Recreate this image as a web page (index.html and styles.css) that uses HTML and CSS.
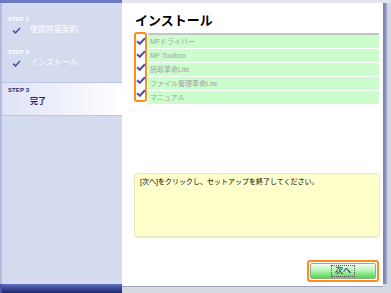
FILE: index.html
```html
<!DOCTYPE html>
<html lang="ja">
<head>
<meta charset="utf-8">
<link rel="stylesheet" href="styles.css">
</head>
<body>
<div class="win">
  <div class="tb-left"></div>
  <div class="tb-right"></div>
  <div class="tb-edge"></div>

  <aside class="side">
    <div class="step">
      <div class="lbl">STEP 1</div>
      <div class="name"><svg class="chk" viewBox="0 0 10 8"><path d="M1 4.2 L3.8 6.8 L9 1.2" fill="none" stroke="#4a559c" stroke-width="1.8"/></svg>使用許諾契約</div>
    </div>
    <div class="step">
      <div class="lbl">STEP 2</div>
      <div class="name"><svg class="chk" viewBox="0 0 10 8"><path d="M1 4.2 L3.8 6.8 L9 1.2" fill="none" stroke="#4a559c" stroke-width="1.8"/></svg>インストール</div>
    </div>
    <div class="step cur">
      <div class="lbl">STEP 3</div>
      <div class="name">完了</div>
    </div>
  </aside>

  <section class="panel">
    <h1 class="title">インストール</h1>
    <div class="list">
      <div class="checks">
        <svg class="lchk" viewBox="0 0 10 8"><path d="M1 4.2 L3.8 6.8 L9 1.2" fill="none" stroke="#4a50a0" stroke-width="2"/></svg>
        <svg class="lchk" viewBox="0 0 10 8"><path d="M1 4.2 L3.8 6.8 L9 1.2" fill="none" stroke="#4a50a0" stroke-width="2"/></svg>
        <svg class="lchk" viewBox="0 0 10 8"><path d="M1 4.2 L3.8 6.8 L9 1.2" fill="none" stroke="#4a50a0" stroke-width="2"/></svg>
        <svg class="lchk" viewBox="0 0 10 8"><path d="M1 4.2 L3.8 6.8 L9 1.2" fill="none" stroke="#4a50a0" stroke-width="2"/></svg>
        <svg class="lchk" viewBox="0 0 10 8"><path d="M1 4.2 L3.8 6.8 L9 1.2" fill="none" stroke="#4a50a0" stroke-width="2"/></svg>
      </div>
      <div class="rows">
        <div class="row">MFドライバー</div>
        <div class="row">MF Toolbox</div>
        <div class="row">読取革命Lite</div>
        <div class="row">ファイル管理革命Lite</div>
        <div class="row">マニュアル</div>
      </div>
    </div>
    <div class="msg">[次へ]をクリックし、セットアップを終了してください。</div>
    <div class="actions">
      <div class="focus"><div class="btn"><span class="btn-txt">次へ</span></div></div>
    </div>
  </section>
  <div class="edge"></div>

  <div class="bb-left"></div>
  <div class="bb-right"></div>
  <div class="bb-edge"></div>
</div>
</body>
</html>
```

FILE: styles.css
```css
html, body {
  margin: 0;
  padding: 0;
}
body {
  width: 391px;
  height: 293px;
  overflow: hidden;
  font-family: "Liberation Sans", "Noto Sans CJK JP", sans-serif;
}
.win {
  display: grid;
  grid-template-columns: 122px 261px 8px;
  grid-template-rows: 3px 281px 9px;
  width: 391px;
  height: 293px;
}
.tb-left { background: #6e7bc2; }
.tb-right { background: #e4e5ec; }
.tb-edge { background: #e4e5ec; }

.side {
  background: #d5dbef;
  border-left: 2px solid #b3bce0;
  padding-top: 12px;
  box-sizing: border-box;
}
.step {
  height: 33px;
  box-sizing: border-box;
  padding-left: 6px;
}
.lbl {
  font-size: 6px;
  font-weight: bold;
  line-height: 8px;
  color: #ffffff;
  letter-spacing: 0.1px;
}
.name {
  display: flex;
  align-items: center;
  font-size: 8px;
  line-height: 10px;
  color: #ffffff;
  margin-top: 2px;
  padding-left: 4px;
}
.chk {
  width: 9px;
  height: 7px;
  margin-right: 9px;
}
.step.cur {
  margin-top: 1px;
  height: 34px;
  border-top: 1px solid #bcc4e2;
  border-bottom: 1px solid #bcc4e2;
  background: linear-gradient(to right, #dfe3f4 0%, #eef1fb 50%, #ffffff 100%);
  padding-top: 3px;
}
.step.cur .lbl { color: #1f2a78; }
.step.cur .name {
  color: #1f2a78;
  font-weight: bold;
  padding-left: 22px;
  margin-top: 3px;
}

.panel {
  background: #ffffff;
  padding: 0 4px 0 12px;
  display: flex;
  flex-direction: column;
}
.title {
  margin: 9px 0 0 1px;
  font-size: 13px;
  line-height: 18px;
  font-weight: bold;
  color: #000000;
}
.list {
  display: flex;
  margin-top: 3px;
}
.checks {
  width: 13px;
  border: 2px solid #ff8c1e;
  border-radius: 3px;
  padding: 1px 0;
  display: flex;
  flex-direction: column;
  align-items: center;
  justify-content: space-around;
  height: 70px;
  box-sizing: border-box;
  margin-top: -1px;
}
.lchk {
  width: 10px;
  height: 8px;
}
.rows {
  flex: 1;
  border-top: 2px solid #c2c4c8;
  margin-left: 1px;
  height: 68px;
  box-sizing: border-box;
  display: flex;
  flex-direction: column;
}
.row {
  height: 13px;
  background: #ccfdcc;
  border-bottom: 1px solid #ffffff;
  box-sizing: content-box;
  font-size: 7px;
  line-height: 13px;
  color: #a4a4a4;
  padding-left: 2px;
}
.row:last-child { border-bottom: none; }

.msg {
  margin-top: 71px;
  height: 64px;
  width: 246px;
  box-sizing: border-box;
  background: #ffffcc;
  border: 1px solid #e7e7bd;
  border-radius: 4px;
  box-shadow: 0 1px 1px #ececd8;
  font-size: 7px;
  line-height: 9px;
  color: #000000;
  padding: 3px 5px;
}
.actions {
  display: flex;
  justify-content: flex-end;
  margin-top: 23px;
}
.focus {
  border: 2px solid #ff8c1e;
  border-radius: 3px;
  padding: 1px;
}
.btn {
  display: flex;
  align-items: center;
  justify-content: center;
  width: 66px;
  height: 16px;
  box-sizing: border-box;
  border: 1px solid #8fae8f;
  border-radius: 2px;
  background: linear-gradient(#f4fff4 0%, #b8f4b8 45%, #4ed84e 100%);
}
.btn-txt {
  font-size: 8px;
  line-height: 10px;
  color: #000000;
  outline: 1px dotted #555555;
  padding: 0 3px;
}
.edge {
  background: linear-gradient(to right, #7c84ac 0, #8a92b8 3px, #c6cadc 4px, #dcdee8 8px);
}
.bb-left {
  background: linear-gradient(#6170c4 0%, #3a4896 50%, #1e2a66 100%);
  border-left: 2px solid #4a58a8;
}
.bb-right {
  background: linear-gradient(#ffffff 0 2px, #9ea2b8 2px 3px, #d6d8e2 3px);
}
.bb-edge {
  background: #d6d8e2;
}
```
